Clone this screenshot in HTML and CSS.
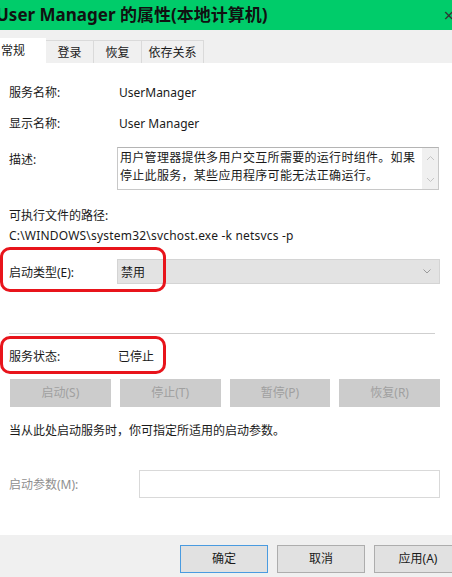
FILE: index.html
```html
<!DOCTYPE html>
<html>
<head>
<meta charset="utf-8">
<link rel="stylesheet" href="styles.css">
</head>
<body>
<div class="window">
  <div class="titlebar">
    <span class="title">User Manager 的属性(本地计算机)</span>
    <span class="close">×</span>
  </div>
  <div class="tabs">
    <div class="tab active">常规</div>
    <div class="tab">登录</div>
    <div class="tab">恢复</div>
    <div class="tab wide">依存关系</div>
  </div>
  <div class="panel">
    <div class="row r1"><span class="label">服务名称:</span><span class="value">UserManager</span></div>
    <div class="row r2"><span class="label">显示名称:</span><span class="value">User Manager</span></div>
    <div class="desc-row">
      <span class="label desc-label">描述:</span>
      <div class="textarea">
        <div class="ta-text">用户管理器提供多用户交互所需要的运行时组件。如果停止此服务，某些应用程序可能无法正确运行。</div>
        <div class="scroll">
          <svg width="9" height="6" viewBox="0 0 9 6"><path d="M1 5 L4.5 1.5 L8 5" fill="none" stroke="#c4c4c4" stroke-width="1"/></svg>
          <svg width="9" height="6" viewBox="0 0 9 6"><path d="M1 1 L4.5 4.5 L8 1" fill="none" stroke="#c4c4c4" stroke-width="1"/></svg>
        </div>
      </div>
    </div>
    <div class="path-label">可执行文件的路径:</div>
    <div class="path">C:\WINDOWS\system32\svchost.exe -k netsvcs -p</div>
    <div class="combo-row">
      <span class="label combo-label">启动类型(E):</span>
      <div class="combo">
        <span>禁用</span>
        <svg width="8" height="5" viewBox="0 0 8 5"><path d="M0.5 0.5 L4 4 L7.5 0.5" fill="none" stroke="#9a9a9a" stroke-width="1"/></svg>
      </div>
    </div>
    <div class="sep"></div>
    <div class="row status-row"><span class="label">服务状态:</span><span class="value status">已停止</span></div>
    <div class="svc-buttons">
      <div class="dbtn">启动(S)</div>
      <div class="dbtn">停止(T)</div>
      <div class="dbtn">暂停(P)</div>
      <div class="dbtn">恢复(R)</div>
    </div>
    <div class="hint">当从此处启动服务时，你可指定所适用的启动参数。</div>
    <div class="param-row">
      <span class="param-label">启动参数(M):</span>
      <div class="param-input"></div>
    </div>
  </div>
  <div class="footer">
    <div class="fbtn default">确定</div>
    <div class="fbtn">取消</div>
    <div class="fbtn">应用(A)</div>
  </div>
  <div class="mark mark1"></div>
  <div class="mark mark2"></div>
</div>
</body>
</html>
```

FILE: styles.css
```css
html, body {
  margin: 0;
  padding: 0;
}
body {
  width: 452px;
  height: 577px;
  overflow: hidden;
  font-family: "Noto Sans", "Noto Sans CJK SC", sans-serif;
  font-size: 12px;
  color: #1a1a1a;
}
.window {
  position: relative;
  width: 452px;
  height: 577px;
  overflow: hidden;
  background: #f0f0f0;
}
.titlebar {
  height: 30px;
  background: #00cc6a;
  display: flex;
  align-items: center;
  justify-content: space-between;
  overflow: hidden;
}
.title {
  margin-left: -4px;
  font-weight: bold;
  font-size: 17px;
  line-height: 30px;
  color: #111;
  white-space: nowrap;
}
.close {
  font-size: 18px;
  line-height: 30px;
  color: #333;
  margin-right: -2px;
}
.tabs {
  height: 33px;
  display: flex;
  align-items: flex-end;
}
.tab {
  flex: none;
  height: 23px;
  line-height: 23px;
  width: 48px;
  box-sizing: border-box;
  border: 1px solid #dadada;
  border-bottom: none;
  border-left: none;
  background: #f0f0f0;
  text-align: center;
  white-space: nowrap;
}
.tab.active {
  height: 25px;
  line-height: 25px;
  background: #fff;
  border: none;
  width: 46px;
  text-align: left;
  padding-left: 1px;
}
.tab.wide {
  width: 62px;
}
.panel {
  height: 472px;
  background: #fff;
  padding: 0 12px 0 9px;
  box-sizing: border-box;
  display: flex;
  flex-direction: column;
}
.row {
  display: flex;
  line-height: 18px;
  height: 18px;
}
.label {
  width: 110px;
  flex: none;
}
.r1 { margin-top: 21px; }
.r2 { margin-top: 13px; }
.desc-row {
  margin-top: 14px;
  display: flex;
}
.desc-label {
  width: 108px;
  padding-top: 4px;
  line-height: 18px;
}
.textarea {
  width: 322px;
  height: 43px;
  box-sizing: border-box;
  border: 1px solid #c8c8c8;
  border-top-color: #b4b4b4;
  display: flex;
}
.ta-text {
  flex: 1;
  padding: 1px 0 0 2px;
  line-height: 18px;
  letter-spacing: 0.3px;
}
.scroll {
  width: 16px;
  background: #f0f0f0;
  display: flex;
  flex-direction: column;
  justify-content: space-between;
  align-items: center;
  padding: 7px 0 6px;
  box-sizing: border-box;
}
.scroll svg { display: block; }
.path-label {
  margin-top: 16px;
  line-height: 20px;
}
.path {
  line-height: 20px;
  letter-spacing: 0.2px;
}
.combo-row {
  margin-top: 13px;
  display: flex;
  align-items: center;
  height: 25px;
}
.combo-label {
  width: 108px;
}
.combo {
  width: 324px;
  height: 25px;
  box-sizing: border-box;
  background: #e3e3e3;
  border: 1px solid #d4d4d4;
  display: flex;
  align-items: center;
  justify-content: space-between;
  padding: 0 8px 0 3px;
}
.combo svg { display: block; }
.sep {
  margin-top: 49px;
  height: 1px;
  width: 426px;
  background: #cfcfcf;
}
.status-row {
  margin-top: 14px;
}
.status {
  margin-left: -1px;
}
.svc-buttons {
  margin-top: 13px;
  margin-left: 1px;
  width: 430px;
  display: grid;
  grid-template-columns: repeat(4, 1fr);
  gap: 9px;
}
.dbtn {
  height: 28px;
  line-height: 28px;
  background: #cccccc;
  color: #a0a0a0;
  text-align: center;
}
.hint {
  margin-top: 15px;
  line-height: 18px;
}
.param-row {
  margin-top: 30px;
  display: flex;
  align-items: center;
}
.param-label {
  width: 130px;
  color: #8f8f8f;
  flex: none;
}
.param-input {
  width: 301px;
  height: 28px;
  box-sizing: border-box;
  border: 1px solid #d9d9d9;
  background: #fff;
}
.footer {
  height: 42px;
  padding: 10px 0 0 180px;
  box-sizing: border-box;
  display: flex;
  gap: 9px;
  background: #f0f0f0;
}
.fbtn {
  flex: none;
  width: 88px;
  height: 28px;
  line-height: 26px;
  box-sizing: border-box;
  border: 1px solid #adadad;
  background: #e1e1e1;
  text-align: center;
}
.fbtn.default {
  border: 1px solid #4a9be0;
}
.mark {
  position: absolute;
  border: 3px solid #e8141b;
  border-radius: 10px;
  box-sizing: border-box;
}
.mark1 {
  left: 0;
  top: 247px;
  width: 166px;
  height: 45px;
}
.mark2 {
  left: 0;
  top: 336px;
  width: 166px;
  height: 38px;
}
```
